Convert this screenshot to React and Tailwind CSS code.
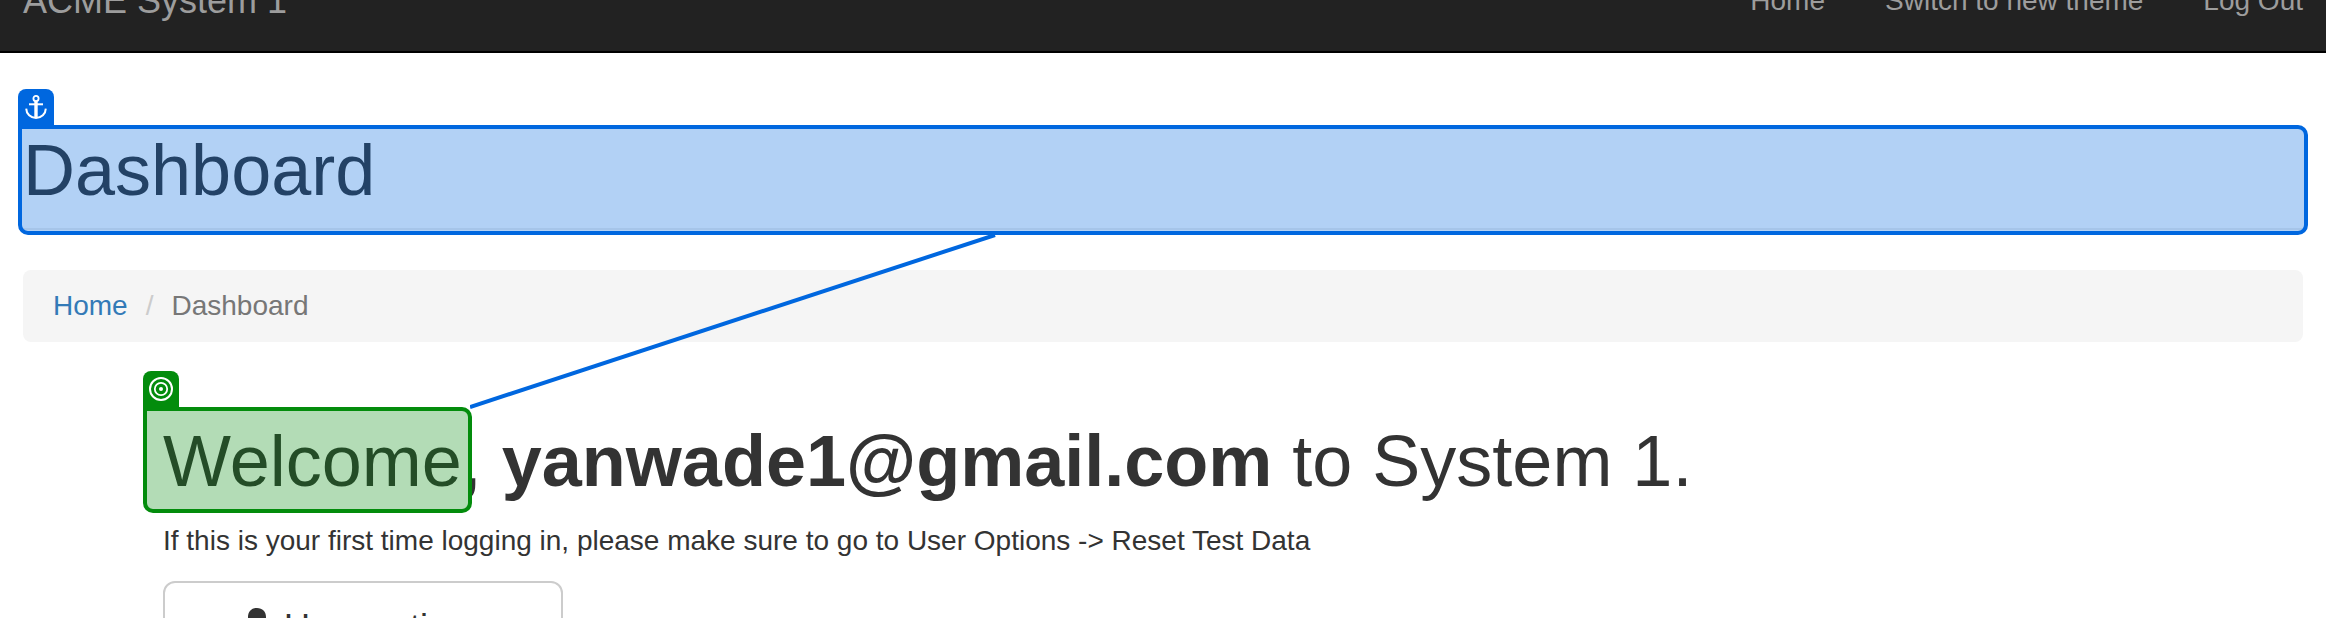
const navLinks = ["Home", "Switch to new theme", "Log Out"];

function AnchorIcon() {
  return (
    <svg viewBox="0 0 24 24" className="size-6" fill="none" stroke="white" aria-hidden="true">
      <circle cx="12" cy="3.5" r="2.6" strokeWidth="1.8" />
      <path d="M12 6v17" strokeWidth="3.4" />
      <path d="M5 9.3h14" strokeWidth="2" />
      <path d="M2.200 13.600C2.400 19 6.600 23 12 23S21.600 19 21.800 13.600" strokeWidth="2" />
    </svg>
  );
}

function TargetIcon() {
  return (
    <svg viewBox="0 0 24 24" className="size-6" fill="none" stroke="white" aria-hidden="true">
      <circle cx="12" cy="12" r="11" strokeWidth="2" />
      <circle cx="12" cy="12" r="6.2" strokeWidth="1.8" />
      <circle cx="12" cy="12" r="2" fill="white" stroke="none" />
    </svg>
  );
}

function UserIcon() {
  return (
    <svg viewBox="0 0 36 40" className="h-10 w-9" fill="currentColor" aria-hidden="true">
      <path d="M17 0c5.500 0 9 3.600 9 9 0 4.500-1.500 9-3.500 11v3l9 4.500c1.500.8 2.500 2 2.500 4v3H0v-3c0-2 1-3.200 2.500-4l9-4.500v-3C9.500 18 8 13.500 8 9c0-5.400 3.500-9 9-9z" />
    </svg>
  );
}

export default function App() {
  return (
    <div className="h-screen overflow-hidden bg-white font-['Liberation_Sans',Arial,sans-serif] text-[28px] leading-10 text-[#333]">
      <nav className="-mt-[49px] flex h-[102px] items-center justify-between border-b-2 border-black bg-[#222] px-[23px] text-[#9d9d9d]">
        <a href="#" className="text-4xl leading-10">ACME System 1</a>
        <div className="flex gap-[60px]">
          {navLinks.map((label) => (
            <a key={label} href="#">{label}</a>
          ))}
        </div>
      </nav>

      <main className="px-[23px] pt-[76px]">
        <div className="relative">
          <h1 className="h-[101px] border-b-2 border-[#eee] pt-0.5 text-[72px] leading-[79px]">Dashboard</h1>
          <div className="absolute -inset-x-[5px] -top-1 -bottom-[5px] rounded-[10px] rounded-tl-none border-4 border-[#0067df] bg-[#0067df]/30" />
          <div className="absolute -left-[5px] -top-10 flex size-9 items-center justify-center rounded-t-lg bg-[#0067df]">
            <AnchorIcon />
          </div>
        </div>

        <ol className="relative mt-10 flex rounded-lg bg-[#f5f5f5] px-[30px] py-4">
          <li><a href="#" className="text-[#337ab7]">Home</a></li>
          <li aria-hidden="true" className="px-[18px] text-[#ccc]">/</li>
          <li className="text-[#777]">Dashboard</li>
          <svg className="absolute left-[447px] -top-9 z-10 h-[175px] w-[530px]" viewBox="0 0 530 175" aria-hidden="true">
            <path d="M0 173L525 1" stroke="#0067df" strokeWidth="4" />
          </svg>
        </ol>

        <section className="px-[140px] pt-20">
          <h2 className="text-[72px] leading-[79px]">
            <span className="relative">
              Welcome
              <span className="absolute -left-5 -right-2.5 -top-3.5 h-[106px] rounded-[10px] rounded-tl-none border-4 border-[#038c0c] bg-[#038c0c]/30" />
              <span className="absolute -left-5 -top-[50px] flex size-9 items-center justify-center rounded-t-lg bg-[#038c0c]">
                <TargetIcon />
              </span>
            </span>
            , <strong>yanwade1@gmail.com</strong> to System 1.
          </h2>
          <p className="mt-5">If this is your first time logging in, please make sure to go to User Options -&gt; Reset Test Data</p>
          <button type="button" className="mt-5 flex h-[94px] w-[400px] items-center justify-center gap-2 rounded-xl border-2 border-[#ccc] bg-white text-4xl">
            <UserIcon />
            User options
          </button>
        </section>
      </main>
    </div>
  );
}
